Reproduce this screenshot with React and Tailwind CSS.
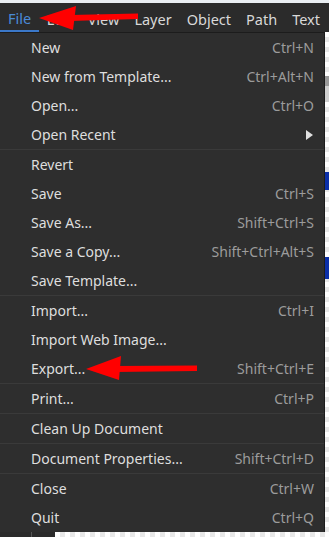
const menuItems = [
  { label: 'New', shortcut: 'Ctrl+N' },
  { label: 'New from Template...', shortcut: 'Ctrl+Alt+N' },
  { label: 'Open...', shortcut: 'Ctrl+O' },
  { label: 'Open Recent', submenu: true, sep: true },
  { label: 'Revert' },
  { label: 'Save', shortcut: 'Ctrl+S' },
  { label: 'Save As...', shortcut: 'Shift+Ctrl+S' },
  { label: 'Save a Copy...', shortcut: 'Shift+Ctrl+Alt+S' },
  { label: 'Save Template...', sep: true },
  { label: 'Import...', shortcut: 'Ctrl+I' },
  { label: 'Import Web Image...' },
  { label: 'Export...', shortcut: 'Shift+Ctrl+E', sep: true },
  { label: 'Print...', shortcut: 'Ctrl+P', sep: true },
  { label: 'Clean Up Document', sep: true },
  { label: 'Document Properties...', shortcut: 'Shift+Ctrl+D', sep: true },
  { label: 'Close', shortcut: 'Ctrl+W' },
  { label: 'Quit', shortcut: 'Ctrl+Q' },
];

const menubar = ['File', 'Edit', 'View', 'Layer', 'Object', 'Path', 'Text'];

function MenuRow({ item }) {
  return (
    <>
      <div className="h-[29px] flex items-center justify-between pl-[31px] pr-[10px]">
        <span className="text-[#dedede]">{item.label}</span>
        {item.shortcut && <span className="text-[#9c9c9c]">{item.shortcut}</span>}
        {item.submenu && (
          <svg className="w-[7px] h-[10px] mr-[1px]" viewBox="0 0 7 10">
            <path d="M0 0 L7 5 L0 10 Z" fill="#e0e0e0" />
          </svg>
        )}
      </div>
      {item.sep && <div className="h-px bg-[#3a3a3a]" />}
    </>
  );
}

export default function App() {
  return (
    <div
      className="relative w-[329px] h-[537px] overflow-hidden bg-[#2b2b2b] text-[14px] leading-none"
      style={{ fontFamily: '"Noto Sans", "Open Sans", sans-serif' }}
    >
      {/* window top edge */}
      <div className="h-[3px] bg-[#e9eef2]" />

      {/* menubar */}
      <div className="h-[29px] flex bg-[#2b2b2b] text-[14.5px]">
        {menubar.map((m, i) => (
          <div
            key={m}
            className={
              i === 0
                ? 'px-[8px] flex items-center pt-[3px] text-[#4a8ad6] border-b-[2px] border-[#3b78c9]'
                : 'px-[7.5px] flex items-center pt-[3px] text-[#d9d9d9]'
            }
          >
            {m}
          </div>
        ))}
      </div>

      <div className="flex">
        {/* dropdown */}
        <div className="w-[325px] bg-[#2e2e2e] border-r border-t border-[#1c1c1c]">
          {menuItems.map((item) => (
            <MenuRow key={item.label} item={item} />
          ))}
        </div>

        {/* canvas peeking at right */}
        <div className="flex-1 flex flex-col bg-[repeating-conic-gradient(#e8e8e8_0_25%,#ffffff_0_50%)] bg-size-[10px_10px]">
          <div className="h-[44px]" />
          <div className="h-[10px] bg-[#9a9a9a]" />
          <div className="h-[16px] bg-[#d0d0d0]" />
          <div className="h-[70px]" />
          <div className="h-[18px] bg-[#0b2fa8]" />
          <div className="h-[67px]" />
          <div className="h-[22px] bg-[#0b2fa8]" />
        </div>
      </div>

      {/* bottom toolbar strip */}
      <div className="flex h-[6px] overflow-hidden">
        <div className="w-[32px] bg-[#2b2b2b] border-r border-[#555]" />
        <div className="w-[23px] bg-[#2b2b2b]" />
        <div className="flex-1 bg-[repeating-conic-gradient(#e8e8e8_0_25%,#ffffff_0_50%)] bg-size-[10px_10px]" />
      </div>

      {/* red annotation arrows */}
      <svg className="absolute left-0 top-0 pointer-events-none" width="329" height="537" viewBox="0 0 329 537">
        <polygon points="39,18 76,6 73,30" fill="#ff0000" />
        <polygon points="70,15 138,13.5 138,19 70,21" fill="#ff0000" />
        <polygon points="86,369 121,356 119,380" fill="#ff0000" />
        <polygon points="115,366 197,365.5 197,371 115,372" fill="#ff0000" />
      </svg>
    </div>
  );
}
